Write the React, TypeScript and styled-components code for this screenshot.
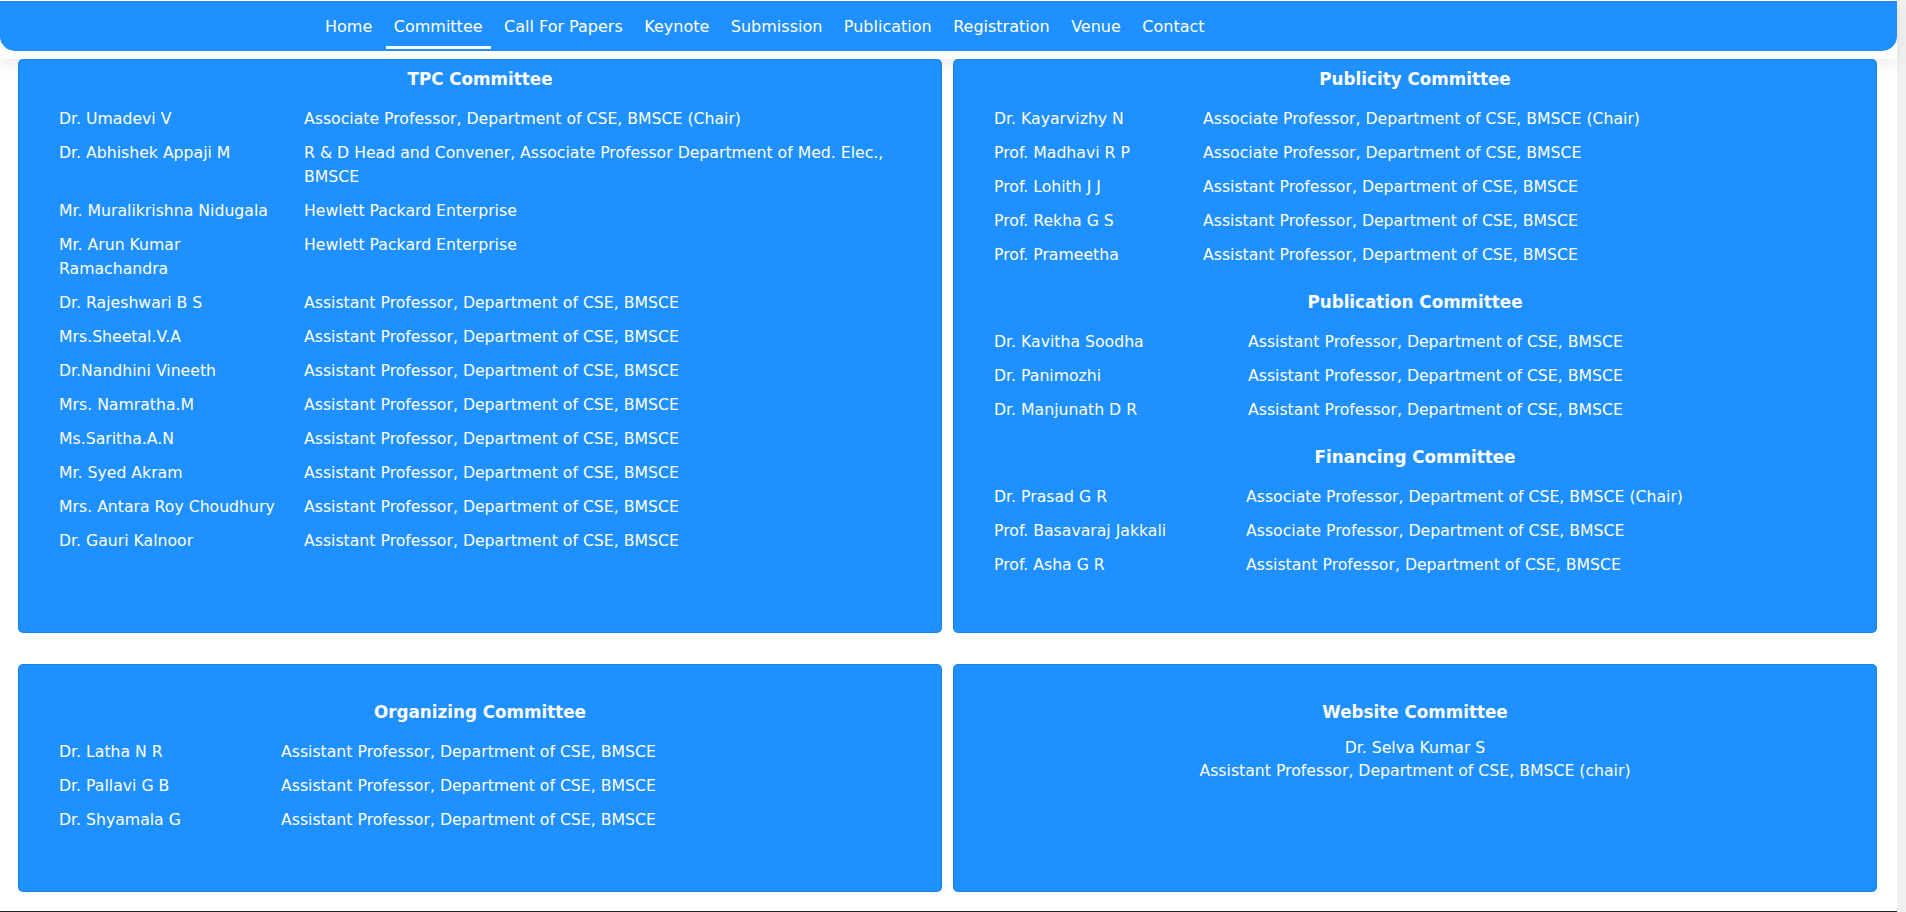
import React from "react";
import styled, { createGlobalStyle } from "styled-components";

const GlobalStyle = createGlobalStyle`
  html, body {
    margin: 0;
    padding: 0;
    height: 100%;
    overflow: hidden;
    background: #f0f0f0;
  }
  body {
    font-family: "DejaVu Sans", "Open Sans", sans-serif;
    color: #ffffff;
  }
  #root {
    width: calc(100% - 9px);
    min-height: 100%;
    background: #ffffff;
  }
  *, *::before, *::after { box-sizing: border-box; }
`;

const Header = styled.header`
  padding: 1px 0 8px;
  background: #ffffff;
  box-shadow: 0 6px 14px rgba(0, 0, 0, 0.07);
`;

const NavBar = styled.nav`
  height: 50px;
  background: #1e90ff;
  border-radius: 0 0 15px 15px;
  display: flex;
  align-items: flex-start;
  padding-left: 317px;
`;

const NavList = styled.ul`
  list-style: none;
  margin: 0;
  padding: 0;
  display: flex;
  gap: 5.5px;
`;

const NavLink = styled.a<{ $active?: boolean }>`
  display: block;
  padding: 14px 8px 7px;
  font-size: 16px;
  line-height: 24px;
  color: #ffffff;
  text-decoration: none;
  border-bottom: 3px solid ${(p) => (p.$active ? "#ffffff" : "transparent")};
  white-space: nowrap;
`;

const Main = styled.main`
  display: grid;
  grid-template-columns: 1fr 1fr;
  column-gap: 11px;
  row-gap: 31px;
  padding: 0 20px 0 18px;
`;

const Card = styled.section<{ $bottom?: boolean; $padBottom?: number }>`
  background: #1e90ff;
  border: 1px solid rgba(0, 0, 0, 0.1);
  border-radius: 5px;
  padding-top: ${(p) => (p.$bottom ? 36 : 8)}px;
  padding-bottom: ${(p) => p.$padBottom ?? (p.$bottom ? 54 : 50)}px;
`;

const Section = styled.div`
  & + & {
    margin-top: 19px;
  }
`;

const SectionTitle = styled.h5`
  margin: 0 0 11px;
  font-size: 16.75px;
  line-height: 23px;
  font-weight: 700;
  text-align: center;
  color: #ffffff;
`;

const MemberTable = styled.div<{ $nameWidth: number; $roleWidth?: number }>`
  display: grid;
  grid-template-columns: ${(p) => p.$nameWidth}px ${(p) =>
      p.$roleWidth ? `${p.$roleWidth}px` : "auto"};
  justify-content: start;
  margin-left: 40px;
  font-size: 15.7px;
  line-height: 24px;
`;

const Cell = styled.div`
  padding: 5px 0;
`;

const NameCell = styled(Cell)`
  padding-right: 20px;
`;

const CenteredInfo = styled.p`
  margin: 12px 0 0;
  font-size: 15.7px;
  line-height: 23px;
  text-align: center;
`;

const Footer = styled.footer`
  margin-top: 19px;
  height: 320px;
  background: #212529;
`;

type Member = [string, string];

const ASST = "Assistant Professor, Department of CSE, BMSCE";
const ASSOC = "Associate Professor, Department of CSE, BMSCE";

const tpc: Member[] = [
  ["Dr. Umadevi V", ASSOC + " (Chair)"],
  [
    "Dr. Abhishek Appaji M",
    "R & D Head and Convener, Associate Professor Department of Med. Elec., BMSCE",
  ],
  ["Mr. Muralikrishna Nidugala", "Hewlett Packard Enterprise"],
  ["Mr. Arun Kumar Ramachandra", "Hewlett Packard Enterprise"],
  ["Dr. Rajeshwari B S", ASST],
  ["Mrs.Sheetal.V.A", ASST],
  ["Dr.Nandhini Vineeth", ASST],
  ["Mrs. Namratha.M", ASST],
  ["Ms.Saritha.A.N", ASST],
  ["Mr. Syed Akram", ASST],
  ["Mrs. Antara Roy Choudhury", ASST],
  ["Dr. Gauri Kalnoor", ASST],
];

const publicity: Member[] = [
  ["Dr. Kayarvizhy N", ASSOC + " (Chair)"],
  ["Prof. Madhavi R P", ASSOC],
  ["Prof. Lohith J J", ASST],
  ["Prof. Rekha G S", ASST],
  ["Prof. Prameetha", ASST],
];

const publication: Member[] = [
  ["Dr. Kavitha Soodha", ASST],
  ["Dr. Panimozhi", ASST],
  ["Dr. Manjunath D R", ASST],
];

const financing: Member[] = [
  ["Dr. Prasad G R", ASSOC + " (Chair)"],
  ["Prof. Basavaraj Jakkali", ASSOC],
  ["Prof. Asha G R", ASST],
];

const organizing: Member[] = [
  ["Dr. Latha N R", ASST],
  ["Dr. Pallavi G B", ASST],
  ["Dr. Shyamala G", ASST],
];

const navItems = [
  "Home",
  "Committee",
  "Call For Papers",
  "Keynote",
  "Submission",
  "Publication",
  "Registration",
  "Venue",
  "Contact",
];

function Committee({
  title,
  members,
  nameWidth,
  roleWidth,
}: {
  title: string;
  members: Member[];
  nameWidth: number;
  roleWidth?: number;
}) {
  return (
    <Section>
      <SectionTitle>{title}</SectionTitle>
      <MemberTable $nameWidth={nameWidth} $roleWidth={roleWidth}>
        {members.map(([name, role]) => (
          <React.Fragment key={name}>
            <NameCell>{name}</NameCell>
            <Cell>{role}</Cell>
          </React.Fragment>
        ))}
      </MemberTable>
    </Section>
  );
}

export default function App() {
  return (
    <>
      <GlobalStyle />
      <Header>
        <NavBar>
          <NavList>
            {navItems.map((item) => (
              <li key={item}>
                <NavLink href="#" $active={item === "Committee"}>
                  {item}
                </NavLink>
              </li>
            ))}
          </NavList>
        </NavBar>
      </Header>
      <Main>
        <Card $padBottom={74}>
          <Committee title="TPC Committee" members={tpc} nameWidth={245} roleWidth={605} />
        </Card>
        <Card>
          <Committee title="Publicity Committee" members={publicity} nameWidth={209} />
          <Committee title="Publication Committee" members={publication} nameWidth={254} />
          <Committee title="Financing Committee" members={financing} nameWidth={252} />
        </Card>
        <Card $bottom>
          <Committee title="Organizing Committee" members={organizing} nameWidth={222} />
        </Card>
        <Card $bottom>
          <SectionTitle>Website Committee</SectionTitle>
          <CenteredInfo>
            Dr. Selva Kumar S
            <br />
            Assistant Professor, Department of CSE, BMSCE (chair)
          </CenteredInfo>
        </Card>
      </Main>
      <Footer />
    </>
  );
}
